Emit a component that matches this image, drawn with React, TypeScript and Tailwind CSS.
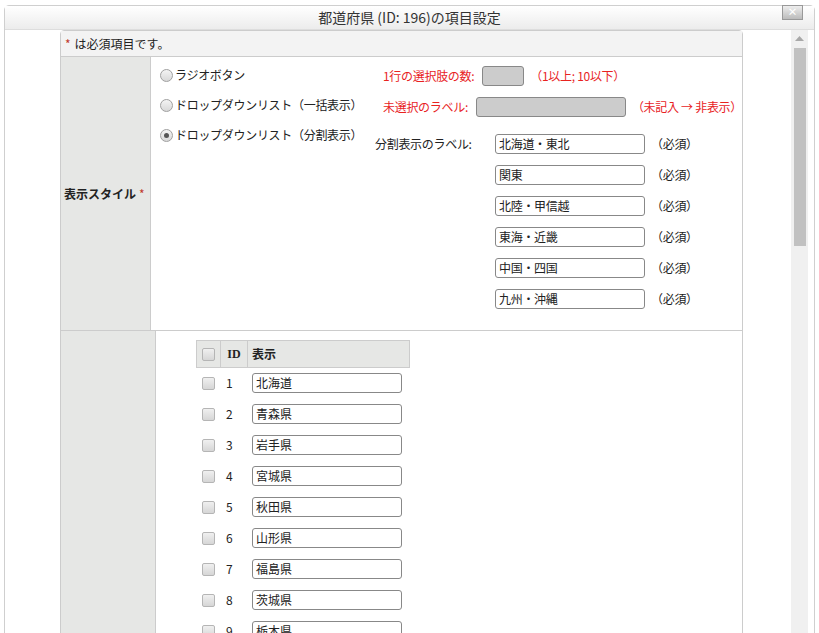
const font = { fontFamily: '"Noto Sans CJK JP", "Noto Sans", sans-serif' };

const labels = ["北海道・東北", "関東", "北陸・甲信越", "東海・近畿", "中国・四国", "九州・沖縄"];
const prefs = ["北海道", "青森県", "岩手県", "宮城県", "秋田県", "山形県", "福島県", "茨城県", "栃木県"];

function Radio({ checked }: { checked?: boolean }) {
  return (
    <span className="w-[13px] h-[13px] rounded-full border border-[#a0a0a0] bg-gradient-to-b from-[#f4f4f4] to-[#d8d8d8] flex items-center justify-center shrink-0">
      {checked && <span className="w-[5px] h-[5px] rounded-full bg-[#555]" />}
    </span>
  );
}

function Check() {
  return <span className="block w-[13px] h-[13px] rounded-[2px] border border-[#b5b5b5] bg-gradient-to-b from-[#f0f0f0] to-[#d6d6d6]" />;
}

export default function App() {
  return (
    <div style={font} className="h-[633px] w-[819px] overflow-hidden bg-white text-[12px] text-[#222]">
      <div className="mx-[4px] mt-[5px] h-[640px] rounded-t-[5px] border border-[#cfcfcf] flex flex-col">
        {/* title bar */}
        <div className="relative h-[23px] bg-gradient-to-b from-white to-[#ececec] flex items-center justify-center text-[14px] text-[#333]">
          都道府県 (ID: 196)の項目設定
          <span className="absolute right-[11px] top-[-1px] w-[21px] h-[15px] border border-[#999] bg-gradient-to-b from-[#eee] to-[#bbb] text-[10px] leading-[12px] text-center font-bold text-white">×</span>
        </div>
        <div className="flex-1 flex border-t border-[#ddd]">
          <div className="w-[55px]" />
          {/* panel */}
          <div className="w-[683px] rounded-t-[4px] border border-[#ccc] flex flex-col">
            <div className="h-[26px] bg-[#f3f3f3] border-b border-[#ccc] flex items-center px-[4px]">
              <span className="text-[#c0392b] mr-[4px]">*</span>は必須項目です。
            </div>
            <div className="flex border-b border-[#ccc] h-[274px]">
              <div className="w-[95px] bg-[#e6e7e5] border-r border-[#ccc] flex items-center px-[3px] font-bold">
                表示スタイル<span className="text-[#c0392b] ml-[3px] font-normal">*</span>
              </div>
              <div className="flex-1 flex pt-[9px] tracking-[-0.3px]">
                <div className="w-[222px] pl-[9px] flex flex-col gap-[12px]">
                  <div className="flex items-center gap-[2px] h-[18px]"><Radio />ラジオボタン</div>
                  <div className="flex items-center gap-[2px] h-[18px]"><Radio />ドロップダウンリスト（一括表示）</div>
                  <div className="flex items-center gap-[2px] h-[18px]"><Radio checked />ドロップダウンリスト（分割表示）</div>
                </div>
                <div className="flex-1 flex flex-col whitespace-nowrap">
                  <div className="flex items-center h-[20px] text-[#e8231f] pl-[10px]">
                    1行の選択肢の数:
                    <span className="ml-[8px] w-[42px] h-[20px] rounded-[3px] border border-[#888] bg-[#ccc]" />
                    <span className="ml-[6px]">（1以上; 10以下）</span>
                  </div>
                  <div className="flex items-center h-[20px] text-[#e8231f] pl-[10px] mt-[11px]">
                    未選択のラベル:
                    <span className="ml-[8px] w-[150px] h-[20px] rounded-[3px] border border-[#888] bg-[#ccc]" />
                    <span className="ml-[6px]">（未記入 → 非表示）</span>
                  </div>
                  <div className="flex mt-[17px] pl-[2px]">
                    <div className="w-[120px] pt-[1px]">分割表示のラベル:</div>
                    <div className="flex flex-col gap-[11px]">
                      {labels.map((l) => (
                        <div key={l} className="flex items-center">
                          <span className="w-[150px] h-[20px] rounded-[3px] border border-[#888] px-[3px] leading-[18px]">{l}</span>
                          <span className="ml-[6px]">（必須）</span>
                        </div>
                      ))}
                    </div>
                  </div>
                </div>
              </div>
            </div>
            <div className="flex flex-1">
              <div className="w-[95px] bg-[#e6e7e5] border-r border-[#ccc]" />
              <div className="flex-1 pl-[40px] pt-[9px]">
                <div className="w-[214px] h-[28px] flex bg-[#e6e7e5] border border-[#ccc] font-bold">
                  <div className="w-[24px] border-r border-[#ccc] flex items-center justify-center"><Check /></div>
                  <div className="w-[27px] border-r border-[#ccc] flex items-center justify-center" style={{ fontFamily: '"Liberation Serif", serif' }}>ID</div>
                  <div className="flex items-center pl-[4px]">表示</div>
                </div>
                <div className="flex flex-col gap-[11px] mt-[5px]">
                  {prefs.map((p, i) => (
                    <div key={p} className="flex items-center h-[20px]">
                      <div className="w-[24px] flex justify-center"><Check /></div>
                      <div className="w-[27px] pl-[6px]">{i + 1}</div>
                      <span className="ml-[5px] w-[150px] h-[20px] rounded-[3px] border border-[#888] px-[3px] leading-[18px]">{p}</span>
                    </div>
                  ))}
                </div>
              </div>
            </div>
          </div>
          <div className="w-[48px]" />
          {/* scrollbar */}
          <div className="w-[17px] bg-[#f0f0f0] flex flex-col items-center">
            <svg width="9" height="6" viewBox="0 0 9 6" className="mt-[6px]"><path d="M0 5 L4.5 0 L9 5Z" fill="#a8a8a8" /></svg>
            <div className="mt-[6px] w-[12px] h-[198px] bg-[#c1c1c1]" />
          </div>
        </div>
      </div>
    </div>
  );
}
